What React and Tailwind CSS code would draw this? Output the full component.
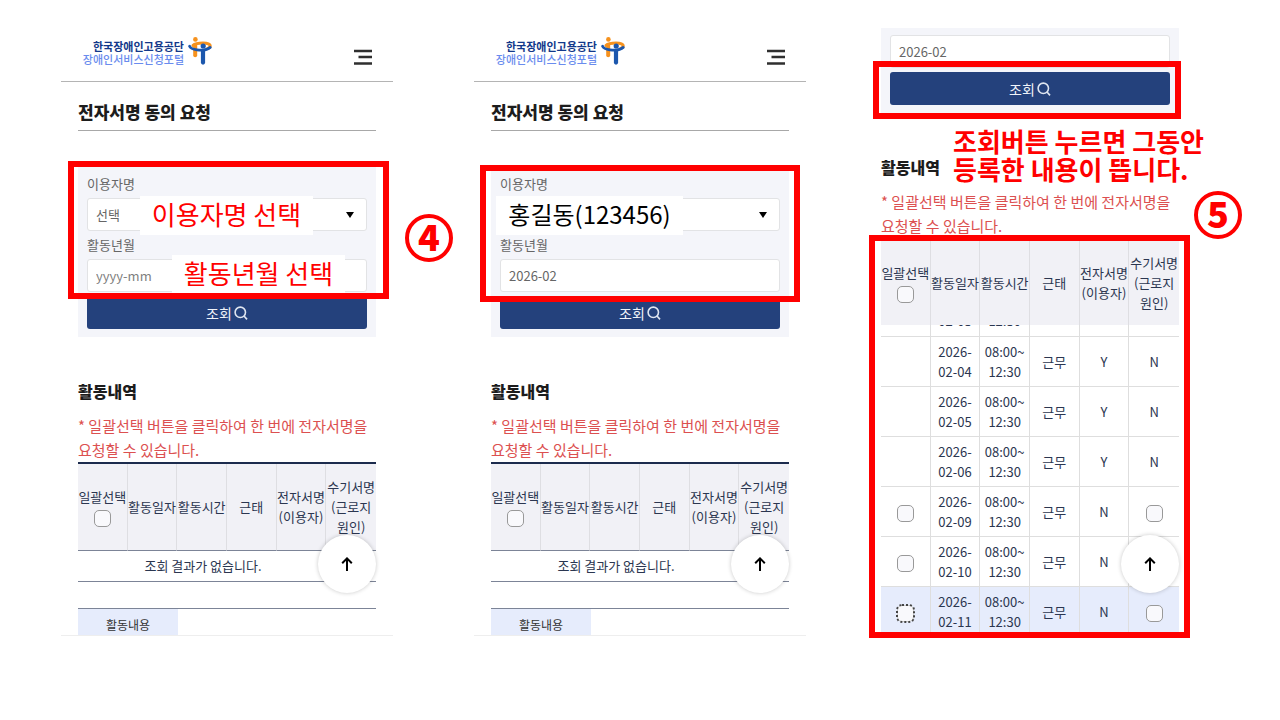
import { useId, useState } from 'react';

const columns = [
  { key: 'all', lines: ['일괄선택'], check: true },
  { key: 'date', lines: ['활동일자'] },
  { key: 'time', lines: ['활동시간'] },
  { key: 'state', lines: ['근태'] },
  { key: 'sign', lines: ['전자서명', '(이용자)'] },
  { key: 'hand', lines: ['수기서명', '(근로지', '원인)'] },
];

const records = [
  { day: '02-04', sign: 'Y' },
  { day: '02-05', sign: 'Y' },
  { day: '02-06', sign: 'Y' },
  { day: '02-09', sign: 'N' },
  { day: '02-10', sign: 'N' },
  { day: '02-11', sign: 'N', focused: true },
];

function Logo() {
  return (
    <a href="#home" className="flex items-start gap-1">
      <span className="flex w-[106px] flex-col items-end whitespace-nowrap pt-[3px] text-[11px] leading-[13px]">
        <span className="font-bold text-[#12388a]">한국장애인고용공단</span>
        <span className="font-medium text-[#6a8cee]">장애인서비스신청포털</span>
      </span>
      <svg viewBox="0 0 24 28" className="h-7 w-6" fill="none" aria-hidden="true">
        <path
          d="M5 8.4C7 6.6 11 6 15 6c4.6 0 7.4 1.200 7.200 3.200-.1 1-1.200 1.800-2.600 2.200"
          stroke="#f6921e"
          strokeWidth="3"
          strokeLinecap="round"
        />
        <path d="M7.200 8v10.200" stroke="#f6921e" strokeWidth="4" strokeLinecap="round" />
        <path
          d="M1.600 9.200c.8 2 3.400 3 7.400 3.600 4.400.6 10.400.2 13.200-2.400"
          stroke="#1c57ad"
          strokeWidth="2.8"
          strokeLinecap="round"
        />
        <path d="M15 14v11.600" stroke="#1c57ad" strokeWidth="4.2" strokeLinecap="round" />
        <circle cx="7.400" cy="2.400" r="2.300" fill="#f6921e" />
        <circle cx="15.200" cy="9" r="2.600" fill="#1c57ad" />
      </svg>
    </a>
  );
}

function Header() {
  return (
    <header className="flex h-[54px] items-start justify-between border-b border-[#b4b4b4] pl-[17px] pr-[21px] pt-[9px]">
      <Logo />
      <button type="button" aria-label="메뉴" className="mt-3">
        <svg viewBox="0 0 18 16" className="h-4 w-[18px]" stroke="#2f2f2f" strokeWidth="2.4">
          <path d="M0 2h18M4.5 8H18M0 14.5h18" />
        </svg>
      </button>
    </header>
  );
}

function Frame({ className }) {
  return (
    <div className={`pointer-events-none absolute border-6 border-[#ff0000] ${className}`} />
  );
}

function Step({ number, className }) {
  return (
    <span
      className={`absolute flex size-12 items-center justify-center rounded-full border-4 border-[#ff0000] pb-1.5 text-4xl font-black text-[#ff0000] ${className}`}
    >
      {number}
    </span>
  );
}

function Memo({ children, className }) {
  return (
    <span
      className={`absolute flex h-[39px] items-center justify-center whitespace-nowrap bg-white pb-1 ${className}`}
    >
      {children}
    </span>
  );
}

function UserField({ children }) {
  const id = useId();
  return (
    <>
      <label htmlFor={id} className="h-5">
        이용자명
      </label>
      <div className="relative">
        <select
          id={id}
          className="block h-[33px] w-full appearance-none rounded-[3px] border border-[#e2e3e5] bg-white px-2 text-[#666]"
        >
          <option>선택</option>
        </select>
        <svg viewBox="0 0 8 6" className="absolute right-[13px] top-[14px] h-1.5 w-2">
          <path d="M0 0h8L4 6z" fill="#000" />
        </svg>
        {children}
      </div>
    </>
  );
}

function MonthInput({ id, value, children }) {
  return (
    <div className="relative">
      <input
        id={id}
        type="text"
        aria-label="활동년월"
        placeholder="yyyy-mm"
        defaultValue={value}
        className="block h-[33px] w-full rounded-[3px] border border-[#e2e3e5] bg-white px-2 text-[#666] placeholder:text-[#808080]"
      />
      {children}
    </div>
  );
}

function SearchButton() {
  return (
    <button
      type="submit"
      className="flex h-[33px] items-center justify-center gap-0.5 rounded-[3px] bg-[#24417c] text-sm text-[#f0f3f9]"
    >
      조회
      <svg viewBox="0 0 14 14" className="size-3.5" fill="none" stroke="#dfe5f0" strokeWidth="1.6">
        <circle cx="6.3" cy="6.3" r="5.2" />
        <path d="M10 10l3 3.4" />
      </svg>
    </button>
  );
}

function Form({ children, className }) {
  return (
    <form
      onSubmit={(e) => e.preventDefault()}
      className={`relative flex flex-col gap-1 bg-[#f4f5fa] px-[9px] pb-2 pt-[7px] text-[13px] leading-5 text-[#666] ${className}`}
    >
      {children}
    </form>
  );
}

function Check({ label, focused }) {
  const [checked, setChecked] = useState(false);
  return (
    <input
      type="checkbox"
      aria-label={label}
      checked={checked}
      onChange={(e) => setChecked(e.target.checked)}
      className={`mx-auto mt-[3px] block size-[17px] appearance-none rounded-[5px] border bg-[#f9f9fc] checked:bg-[#24417c] ${
        focused
          ? 'border-[#ccc] outline-2 -outline-offset-1 outline-dotted outline-[#444]'
          : 'border-[#999]'
      }`}
    />
  );
}

function TableHead({ className }) {
  return (
    <thead>
      <tr className="bg-[#f1f1f6]">
        {columns.map((column) => (
          <th
            key={column.key}
            scope="col"
            className={`whitespace-nowrap border-r border-[#dedee2] p-0 align-middle font-normal last:border-r-0 ${className}`}
          >
            {column.lines.map((line) => (
              <div key={line} className="flex justify-center">
                {line}
              </div>
            ))}
            {column.check && (
              <div className="flex h-5">
                <Check label="일괄선택" />
              </div>
            )}
          </th>
        ))}
      </tr>
    </thead>
  );
}

function HistoryTitle() {
  return (
    <>
      <h3 className="text-base font-black leading-6 text-[#1c1c1c]">활동내역</h3>
      <p className="mt-[11px] text-[15px] leading-6 break-keep text-[#dc5050]">
        * 일괄선택 버튼을 클릭하여 한 번에 전자서명을 요청할 수 있습니다.
      </p>
    </>
  );
}

function TopButton() {
  return (
    <button
      type="button"
      aria-label="맨 위로"
      className="absolute right-[17px] top-[507px] flex size-[58px] items-center justify-center rounded-full bg-white shadow-[0_0_4px_rgba(0,0,0,0.22)]"
    >
      <svg viewBox="0 0 12 14" className="h-3.5 w-3" fill="none" stroke="#000" strokeWidth="2">
        <path d="M6 14V1.5M1.2 6.2L6 1.4l4.8 4.8" />
      </svg>
    </button>
  );
}

function RequestScreen({ form, className }) {
  return (
    <section className={`relative min-w-0 flex-1 border-b border-[#eee] ${className}`}>
      <Header />
      <div className="px-[17px]">
        <h2 className="border-b border-[#a8a8a8] pb-1.5 pt-[18px] text-[17px] font-black leading-6 text-[#1c1c1c]">
          전자서명 동의 요청
        </h2>
        {form}
        <div className="mt-[42px]">
          <HistoryTitle />
          <table className="w-full table-fixed border-separate border-spacing-0 border-t-2 border-[#1c2b4d] text-[13px] leading-5 text-[#2b3650]">
            <TableHead className="h-[87px] border-b border-b-[#7c8497]" />
            <tbody>
              <tr>
                <td
                  colSpan={6}
                  className="h-[31px] border-b border-[#7c8497] p-0 pr-12 text-center"
                >
                  조회 결과가 없습니다.
                </td>
              </tr>
            </tbody>
          </table>
          <div className="mt-[26px] border-t border-[#7c8497]">
            <div className="h-[26px] w-[100px] bg-[#e6ecfc] pt-1.5 text-center text-xs leading-5 text-[#333]">
              활동내용
            </div>
          </div>
        </div>
      </div>
      <TopButton />
    </section>
  );
}

function ScrolledCell({ children }) {
  return (
    <td className="border-b border-r border-[#dedede] p-0 last:border-r-0">
      <div className="flex h-[11px] items-end justify-center overflow-hidden pb-[5px]">
        {children}
      </div>
    </td>
  );
}

function ResultTable() {
  const cell = 'border-b border-r border-[#dedede] p-0 last:border-r-0';
  return (
    <table className="w-full table-fixed border-separate border-spacing-0 border-t-2 border-[#1c2b4d] text-center text-[13px] leading-5 text-[#2b3650]">
      <TableHead className="h-[85px]" />
      <tbody>
        {/* 스크롤되어 머리글 밑에 일부만 보이는 행 */}
        <tr>
          <ScrolledCell />
          <ScrolledCell>02-03</ScrolledCell>
          <ScrolledCell>12:30</ScrolledCell>
          <ScrolledCell />
          <ScrolledCell />
          <ScrolledCell />
        </tr>
        {records.map(({ day, sign, focused }) => (
          <tr key={day} className={focused ? 'h-[50px] bg-[#e6ecfc]' : 'h-[50px]'}>
            <td className={cell}>
              {sign === 'N' && <Check label={`${day} 선택`} focused={focused} />}
            </td>
            <td className={cell}>
              2026-
              <br />
              {day}
            </td>
            <td className={cell}>
              08:00~
              <br />
              12:30
            </td>
            <td className={cell}>근무</td>
            <td className={cell}>{sign}</td>
            <td className={cell}>
              {sign === 'N' ? <Check label={`${day} 수기서명`} /> : 'N'}
            </td>
          </tr>
        ))}
      </tbody>
    </table>
  );
}

function App() {
  const firstMonth = useId();
  const secondMonth = useId();
  const thirdMonth = useId();

  return (
    <main className="flex items-start bg-white pb-20 pl-[61px] pr-[84px] pt-7 font-['Noto_Sans_CJK_KR',sans-serif]">
      <RequestScreen
        className=""
        form={
          <Form className="mt-9">
            <UserField>
              <Memo className="-top-0.5 left-[53px] w-[173px] text-[26px] text-[#ff0000]">
                이용자명 선택
              </Memo>
            </UserField>
            <label htmlFor={firstMonth} className="h-5">
              활동년월
            </label>
            <MonthInput id={firstMonth}>
              <Memo className="-top-1 left-[85px] w-[173px] text-[26px] text-[#ff0000]">
                활동년월 선택
              </Memo>
            </MonthInput>
            <SearchButton />
            <Frame className="-left-2.5 -right-[13px] -top-1.5 bottom-[38px]" />
            <Step number={4} className="-right-[77px] top-[47px]" />
          </Form>
        }
      />
      <RequestScreen
        className="ml-[81px]"
        form={
          <Form className="mt-9">
            <UserField>
              <Memo className="-left-1 -top-0.5 w-[187px] text-2xl text-black">
                홍길동(123456)
              </Memo>
            </UserField>
            <label htmlFor={secondMonth} className="h-5">
              활동년월
            </label>
            <MonthInput id={secondMonth} value="2026-02" />
            <SearchButton />
            <Frame className="-left-[11px] -right-[11px] -top-0.5 bottom-[35px]" />
          </Form>
        }
      />
      <section className="relative ml-[58px] min-w-0 flex-1">
        <div className="px-[17px]">
          <Form className="">
            <MonthInput id={thirdMonth} value="2026-02" />
            <SearchButton />
            <Frame className="-bottom-1.5 -left-2 -right-0.5 top-[33px]" />
          </Form>
          <div className="relative mt-[42px]">
            <HistoryTitle />
            <p className="absolute -top-7 left-[72px] whitespace-nowrap text-[26px] font-bold leading-7 text-[#ff0000]">
              조회버튼 누르면 그동안
              <br />
              등록한 내용이 뜹니다.
            </p>
            <Step number={5} className="-right-[63px] top-9" />
          </div>
          <div className="relative">
            <ResultTable />
            <Frame className="-bottom-px -left-3 -right-[11px] -top-[3px]" />
          </div>
        </div>
        <TopButton />
      </section>
    </main>
  );
}

export default App;
